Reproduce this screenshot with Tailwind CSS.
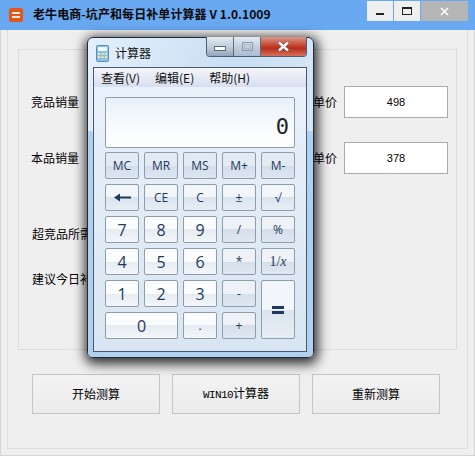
<!DOCTYPE html>
<html lang="en">
<head>
    <meta charset="UTF-8">
    <meta name="viewport" content="width=device-width, initial-scale=1.0">
    <script src="https://cdn.jsdelivr.net/npm/@tailwindcss/browser@4"></script>
    <title>老牛电商</title>
</head>
<body class="w-[475px] h-[456px] overflow-hidden bg-[#efefef] font-['Noto_Sans_CJK_SC',sans-serif] text-[12px] text-black">
    <div class="relative w-[475px] h-[456px] border-x border-b border-[#d4d4d4] flex flex-col">
        <!-- app title bar -->
        <div class="h-[30px] shrink-0 -mx-px bg-[#69a9f2] flex items-start">
            <svg class="w-[14px] h-[14px] mt-[8px] ml-[9px]" viewBox="0 0 14 14">
                <rect width="14" height="14" rx="2" fill="#e2571e"/>
                <rect x="3" y="4" width="8" height="2" fill="#fbe6d8"/>
                <rect x="3" y="8" width="8" height="2" fill="#fbe6d8"/>
            </svg>
            <div class="ml-[10px] mt-[5px] font-bold text-[12px] leading-[18px] whitespace-nowrap tracking-[0.08px] text-[#0a0a0a]">老牛电商-坑产和每日补单计算器 V 1.0.1009</div>
            <div class="ml-auto mr-[7px] mt-px flex gap-px">
                <div class="w-[26px] h-[20px] bg-[#efefef] flex items-center justify-center"><div class="w-[8px] h-[2px] mt-[6px] bg-[#222]"></div></div>
                <div class="w-[26px] h-[20px] bg-[#efefef] flex items-center justify-center"><div class="w-[10px] h-[8px] border border-t-2 border-[#222]"></div></div>
                <div class="w-[47px] h-[20px] bg-[#b5b5b5] flex items-center justify-center">
                    <svg class="w-[9px] h-[9px]" viewBox="0 0 9 9"><path d="M1 1l7 7M8 1l-7 7" stroke="#fff" stroke-width="1.5"/></svg>
                </div>
            </div>
        </div>

        <!-- app body -->
        <div class="flex-1 mx-[6px] mb-[6px] border-x border-b border-[#dedede] px-[10px] pt-[19px]">
            <div class="h-[301px] border border-[#dcdcdc] relative grid grid-cols-[1fr_130px] grid-rows-[56px_56px_72px_auto] pt-[36px] pl-[12px] pr-[8px]">
                <div class="flex items-center h-[32px]">竞品销量</div>
                <div class="flex items-center h-[32px]"><span class="w-[31px] -ml-[5px] shrink-0">单价</span><div class="w-[104px] h-[32px] bg-white border border-[#ababab] flex items-center justify-center font-['Liberation_Sans',sans-serif] text-[11px]">498</div></div>
                <div class="flex items-center h-[32px]">本品销量</div>
                <div class="flex items-center h-[32px]"><span class="w-[31px] -ml-[5px] shrink-0">单价</span><div class="w-[104px] h-[32px] bg-white border border-[#ababab] flex items-center justify-center font-['Liberation_Sans',sans-serif] text-[11px]">378</div></div>
                <div class="col-span-2 ml-px pt-[27px] leading-[18px]">超竞品所需</div>
                <div class="col-span-2 ml-px leading-[18px]">建议今日补单</div>
            </div>
            <div class="mt-[24px] ml-[14px] flex gap-[12px]">
                <button class="w-[128px] h-[40px] border border-[#c4c4c4] bg-[linear-gradient(#f3f3f3,#ebebeb)]">开始测算</button>
                <button class="w-[128px] h-[40px] border border-[#c4c4c4] bg-[linear-gradient(#f3f3f3,#ebebeb)]"><span class="font-['Liberation_Mono',monospace] text-[11px] tracking-[-0.6px]">WIN10</span>计算器</button>
                <button class="w-[128px] h-[40px] border border-[#c4c4c4] bg-[linear-gradient(#f3f3f3,#ebebeb)]">重新测算</button>
            </div>
        </div>

        <!-- calculator window over the app -->
        <div class="absolute left-[86px] top-[37px] w-[227px] h-[321px] rounded-[6px] border border-[#1f2a36] bg-[linear-gradient(100deg,#e4f0fb_0%,#c8def3_55%,#dcebf9_100%)] shadow-[1px_3px_12px_3px_rgba(0,0,0,0.8)] font-['Open_Sans',sans-serif]">
            <div class="absolute inset-x-0 top-[93px] bottom-0 rounded-b-[5px] bg-[#b1d0f0]"></div>
            <!-- caption -->
            <div class="relative h-[29px] flex items-start">
                <svg class="w-[13px] h-[17px] mt-[7px] ml-[8px]" viewBox="0 0 13 17">
                    <rect x=".5" y=".5" width="12" height="16" rx="1" fill="#8dbfe6" stroke="#5a8fb8"/>
                    <rect x="2" y="2" width="9" height="4" fill="#eef7fd"/>
                    <path d="M2 8h2v2H2zM5.500 8h2v2h-2zM9 8h2v2H9zM2 11h2v2H2zM5.500 11h2v2h-2zM9 11h2v2H9z" fill="#f1e3b0"/>
                </svg>
                <div class="ml-[6px] mt-[6px] font-['Noto_Sans_CJK_SC',sans-serif] text-[12px] leading-[18px] text-[#111]">计算器</div>
                <div class="absolute right-[6px] -top-px flex h-[20px] rounded-b-[4px] overflow-hidden border border-t-0 border-[#4d5f74]">
                    <div class="w-[27px] bg-[linear-gradient(#e3eaf2,#c3d0dd_50%,#8fa6bb)] border-r border-[#5b6c7e] flex items-center justify-center"><div class="w-[12px] h-[5px] mt-[3px] border border-[#56677a] bg-white"></div></div>
                    <div class="w-[27px] bg-[linear-gradient(#e3eaf2,#c3d0dd_50%,#a9bccf)] border-r border-[#5b6c7e] flex items-center justify-center"><div class="w-[11px] h-[9px] border border-[#8a99a9] p-px"><div class="w-full h-full border border-[#a9b6c4]"></div></div></div>
                    <div class="w-[45px] bg-[linear-gradient(#d9988c_0%,#c4442f_45%,#b5301c_60%,#d8705c)] flex items-center justify-center">
                        <svg class="w-[13px] h-[11px]" viewBox="0 0 13 11"><path d="M2 1.500l9 8M11 1.500l-9 8" stroke="#5f3a34" stroke-width="3.400"/><path d="M2 1.500l9 8M11 1.500l-9 8" stroke="#fff" stroke-width="2.400"/></svg>
                    </div>
                </div>
            </div>
            <!-- client area -->
            <div class="relative ml-[5px] mr-[6px] h-[285px] border border-[#48596b] bg-[linear-gradient(#eaf2fb,#d9e5f2)]">
                <div class="h-[19px] bg-[linear-gradient(#f5f6f9,#d7def0)] flex items-center gap-[15px] pl-[7px] text-[12px] leading-[18px] text-[#111] font-['Noto_Sans_CJK_SC',sans-serif]">
                    <span>查看(V)</span><span>编辑(E)</span><span>帮助(H)</span>
                </div>
                <div class="ml-[11px] mt-[10px] w-[190px] h-[51px] rounded-[2px] border border-[#8e9cab] bg-[linear-gradient(#e8f0f9,#f7fafd_55%,#ffffff)] flex items-end justify-end pr-[5px] pb-[7px] font-['DejaVu_Sans_Mono',monospace] text-[22px] leading-[26px] text-[#222]">0</div>
                <div class="ml-[11px] mt-[4px] grid grid-cols-[repeat(5,34px)] auto-rows-[27px] gap-[5px] text-[#1e395b] text-[12px]">
                    <button class="rounded-[2px] border border-[#8e9cab] bg-[linear-gradient(#e2eaf3_50%,#d3deeb_50%,#dce6f1)]">MC</button>
                    <button class="rounded-[2px] border border-[#8e9cab] bg-[linear-gradient(#e2eaf3_50%,#d3deeb_50%,#dce6f1)]">MR</button>
                    <button class="rounded-[2px] border border-[#8e9cab] bg-[linear-gradient(#e2eaf3_50%,#d3deeb_50%,#dce6f1)]">MS</button>
                    <button class="rounded-[2px] border border-[#8e9cab] bg-[linear-gradient(#e2eaf3_50%,#d3deeb_50%,#dce6f1)]">M+</button>
                    <button class="rounded-[2px] border border-[#8e9cab] bg-[linear-gradient(#e2eaf3_50%,#d3deeb_50%,#dce6f1)]">M-</button>

                    <button class="flex items-center justify-center rounded-[2px] border border-[#8e9cab] bg-[linear-gradient(#f2f5f9_50%,#dbe4ee_50%,#e6edf5)]">
                        <svg class="w-[17px] h-[9px]" viewBox="0 0 17 9"><path d="M17 4.500H4" stroke="#1e395b" stroke-width="2"/><path d="M0 4.500L6 0.500V8.500z" fill="#1e395b"/></svg>
                    </button>
                    <button class="rounded-[2px] border border-[#8e9cab] bg-[linear-gradient(#f2f5f9_50%,#dbe4ee_50%,#e6edf5)]">CE</button>
                    <button class="rounded-[2px] border border-[#8e9cab] bg-[linear-gradient(#f2f5f9_50%,#dbe4ee_50%,#e6edf5)]">C</button>
                    <button class="rounded-[2px] border border-[#8e9cab] bg-[linear-gradient(#f2f5f9_50%,#dbe4ee_50%,#e6edf5)]">±</button>
                    <button class="rounded-[2px] border border-[#8e9cab] bg-[linear-gradient(#f2f5f9_50%,#dbe4ee_50%,#e6edf5)]">√</button>

                    <button class="rounded-[2px] border border-[#8e9cab] bg-[linear-gradient(#fbfcfd_50%,#e6ecf3_50%,#f3f6fa)] text-[16px]">7</button>
                    <button class="rounded-[2px] border border-[#8e9cab] bg-[linear-gradient(#fbfcfd_50%,#e6ecf3_50%,#f3f6fa)] text-[16px]">8</button>
                    <button class="rounded-[2px] border border-[#8e9cab] bg-[linear-gradient(#fbfcfd_50%,#e6ecf3_50%,#f3f6fa)] text-[16px]">9</button>
                    <button class="rounded-[2px] border border-[#8e9cab] bg-[linear-gradient(#eef2f7_50%,#d5dfeb_50%,#dfe7f1)]">/</button>
                    <button class="rounded-[2px] border border-[#8e9cab] bg-[linear-gradient(#eef2f7_50%,#d5dfeb_50%,#dfe7f1)]">%</button>

                    <button class="rounded-[2px] border border-[#8e9cab] bg-[linear-gradient(#fbfcfd_50%,#e6ecf3_50%,#f3f6fa)] text-[16px]">4</button>
                    <button class="rounded-[2px] border border-[#8e9cab] bg-[linear-gradient(#fbfcfd_50%,#e6ecf3_50%,#f3f6fa)] text-[16px]">5</button>
                    <button class="rounded-[2px] border border-[#8e9cab] bg-[linear-gradient(#fbfcfd_50%,#e6ecf3_50%,#f3f6fa)] text-[16px]">6</button>
                    <button class="rounded-[2px] border border-[#8e9cab] bg-[linear-gradient(#eef2f7_50%,#d5dfeb_50%,#dfe7f1)]">*</button>
                    <button class="rounded-[2px] border border-[#8e9cab] bg-[linear-gradient(#eef2f7_50%,#d5dfeb_50%,#dfe7f1)] font-['Liberation_Serif',serif] text-[14px]">1/<i>x</i></button>

                    <button class="rounded-[2px] border border-[#8e9cab] bg-[linear-gradient(#fbfcfd_50%,#e6ecf3_50%,#f3f6fa)] text-[16px]">1</button>
                    <button class="rounded-[2px] border border-[#8e9cab] bg-[linear-gradient(#fbfcfd_50%,#e6ecf3_50%,#f3f6fa)] text-[16px]">2</button>
                    <button class="rounded-[2px] border border-[#8e9cab] bg-[linear-gradient(#fbfcfd_50%,#e6ecf3_50%,#f3f6fa)] text-[16px]">3</button>
                    <button class="rounded-[2px] border border-[#8e9cab] bg-[linear-gradient(#eef2f7_50%,#d5dfeb_50%,#dfe7f1)]">-</button>
                    <button class="row-span-2 rounded-[2px] border border-[#8e9cab] bg-[linear-gradient(#f2f5f9_50%,#dbe4ee_50%,#e6edf5)] flex items-center justify-center"><span class="block w-[12px] h-[8px] border-y-[3px] border-[#1e395b]"></span></button>

                    <button class="col-span-2 rounded-[2px] border border-[#8e9cab] bg-[linear-gradient(#fbfcfd_50%,#e6ecf3_50%,#f3f6fa)] text-[16px]">0</button>
                    <button class="rounded-[2px] border border-[#8e9cab] bg-[linear-gradient(#fbfcfd_50%,#e6ecf3_50%,#f3f6fa)]">.</button>
                    <button class="rounded-[2px] border border-[#8e9cab] bg-[linear-gradient(#eef2f7_50%,#d5dfeb_50%,#dfe7f1)]">+</button>
                </div>
            </div>
        </div>
    </div>
</body>
</html>
